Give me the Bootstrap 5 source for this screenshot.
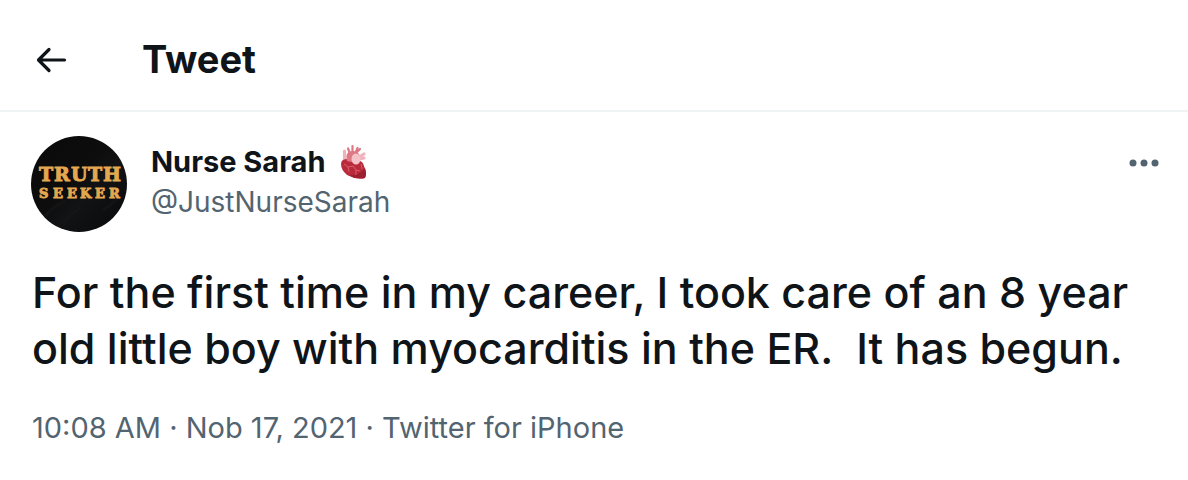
<!DOCTYPE html>
<html lang="en">
<head>
<meta charset="utf-8">
<meta name="viewport" content="width=device-width, initial-scale=1">
<title>Tweet</title>
<link href="https://cdn.jsdelivr.net/npm/bootstrap@5.3.0/dist/css/bootstrap.min.css" rel="stylesheet">
<style>
  body { font-family: Inter, "Liberation Sans", sans-serif; color: #0f1419; background: #fff; }
  .topbar { height: 112px; padding: 8px 32px 0; gap: 70px; border-bottom: 2px solid #eff3f4; }
  .topbar h1 { font-size: 38px; line-height: 48px; font-weight: 700; }
  .icon-button { border: 0; padding: 0; background: none; color: #0f1419; line-height: 0; }
  .tweet { padding: 24px 32px 32px; }
  .tweet-author { gap: 24px; }
  .avatar { width: 96px; height: 96px; margin-left: -1px; }
  .author-name { font-size: 29px; line-height: 40px; font-weight: 700; gap: 14px; padding-top: 6px; }
  .author-handle { font-size: 28px; line-height: 40px; }
  .more-button { margin-top: 13px; margin-right: -6px; }
  .tweet-text { font-size: 43px; line-height: 56px; margin-top: 32px; font-weight: 500; }
  .tweet-meta { font-size: 29px; line-height: 40px; margin-top: 32px; }
  .quiet, .quiet:hover { color: #536471; text-decoration: none; }
  .plain, .plain:hover { color: inherit; text-decoration: none; }
</style>
</head>
<body>
<header class="topbar d-flex align-items-center">
  <button class="icon-button" type="button" aria-label="Back">
    <svg width="40" height="40" viewBox="0 0 40 40" fill="none" stroke="currentColor" stroke-width="3.200" stroke-linecap="round" stroke-linejoin="round" aria-hidden="true"><path d="M32.500 21H7M17 10.500 6.500 21 17 31.500"/></svg>
  </button>
  <h1 class="mb-0">Tweet</h1>
</header>
<main>
  <article class="tweet">
    <div class="tweet-author d-flex">
      <svg class="avatar flex-shrink-0" viewBox="0 0 96 96" role="img" aria-label="Truth Seeker">
        <defs><linearGradient id="cloth" x1="0" y1="0" x2="1" y2="1"><stop offset="0" stop-color="#0a0a0b"/><stop offset=".45" stop-color="#0d0d0e"/><stop offset=".6" stop-color="#121314"/><stop offset="1" stop-color="#08090a"/></linearGradient></defs>
        <circle cx="48" cy="48" r="48" fill="url(#cloth)"/>
        <path d="M14 80Q25 68 35 65M32 88Q40 77 50 72M72 74Q82 68 88 60" stroke="#1b1c1d" stroke-width="3" fill="none" opacity=".4"/>
        <g fill="#e5a851" stroke="#e5a851" stroke-width=".9" font-family="DejaVu Serif, serif" font-weight="700">
          <text x="8 23 40 57 72" y="45" font-size="19">TRUTH</text>
          <text x="8 22 36 49 64 78" y="62" font-size="13">SEEKER</text>
        </g>
      </svg>
      <div class="flex-grow-1">
        <div class="author-name d-flex align-items-center">
          <a class="plain" href="#">Nurse Sarah</a>
          <svg width="28" height="36" viewBox="0 0 28 36" role="img" aria-label="Anatomical heart">
            <path d="M9 4.500l2 5M13.500 2v7M18.500 4l-2 5M21 5l-4 4" stroke="#dc7886" stroke-width="2.200" fill="none" stroke-linecap="round"/>
            <path d="M5.500 7v11M20 13l5-3M20 15l5-1" stroke="#f0b3bc" stroke-width="3.200" fill="none" stroke-linecap="round"/>
            <path d="M4 16Q9 13 17 18Q23 15 25 22Q28 29 26 34Q17 36 8 31Q2 26 2 20Q2 17 4 16Z" fill="#b92b3b"/>
            <path d="M26 24Q28 30 26 34Q17 36 10 31Q20 32 26 24Z" fill="#9d2030"/>
            <path d="M8 17C6 10 9 7 14 7Q20 7 21 13L17 19Z" fill="#de7885"/>
            <ellipse cx="17" cy="15" rx="4.500" ry="5.500" fill="#f5c2c9"/>
            <path d="M5 20l4 3 1 5M9 23l5-1 3 4 4 1M17 26v5M22 20l1 5" stroke="#d95c6c" stroke-width="1" fill="none"/>
          </svg>
        </div>
        <a class="author-handle quiet d-block" href="#">@JustNurseSarah</a>
      </div>
      <button class="more-button icon-button quiet align-self-start" type="button" aria-label="More">
        <svg width="36" height="28" viewBox="0 0 36 28" fill="currentColor" aria-hidden="true"><circle cx="7" cy="14" r="3.500"/><circle cx="18" cy="14" r="3.500"/><circle cx="29" cy="14" r="3.500"/></svg>
      </button>
    </div>
    <p class="tweet-text mb-0">For the first time in my career, I took care of an 8 year old little boy with myocarditis in the ER.&nbsp; It has begun.</p>
    <div class="tweet-meta quiet"><a class="quiet" href="#">10:08 AM · Nob 17, 2021</a> · <a class="quiet" href="#">Twitter for iPhone</a></div>
  </article>
</main>
<script src="https://cdn.jsdelivr.net/npm/bootstrap@5.3.0/dist/js/bootstrap.bundle.min.js"></script>
</body>
</html>
